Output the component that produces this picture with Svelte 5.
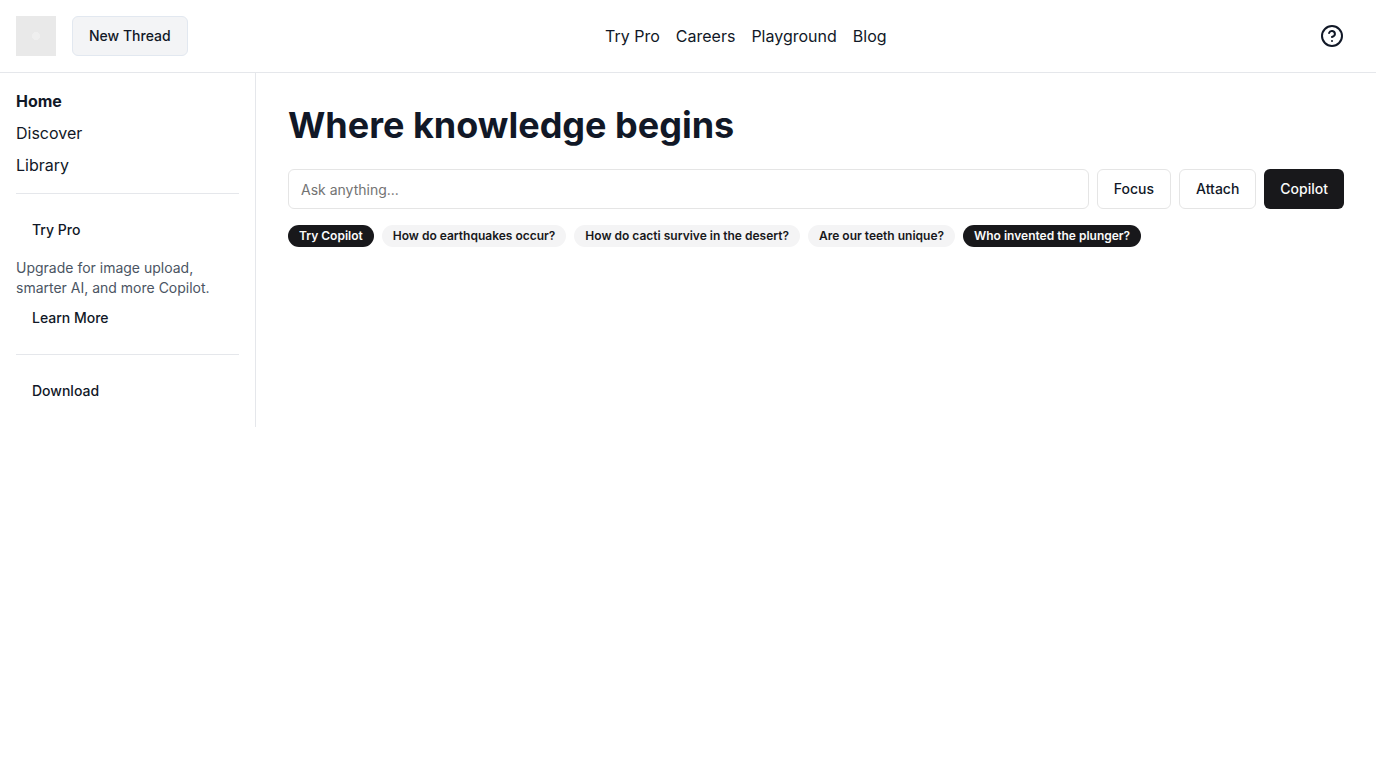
<script>
  const links = ['Try Pro', 'Careers', 'Playground', 'Blog'];
  const pages = ['Home', 'Discover', 'Library'];
  const suggestions = [
    { text: 'Try Copilot', dark: true },
    { text: 'How do earthquakes occur?', dark: false },
    { text: 'How do cacti survive in the desert?', dark: false },
    { text: 'Are our teeth unique?', dark: false },
    { text: 'Who invented the plunger?', dark: true }
  ];
  let question = $state('');
</script>

<header class="topbar">
  <div class="brand">
    <svg class="logo" width="40" height="40" viewBox="0 0 40 40" role="img" aria-label="Logo">
      <rect width="40" height="40" fill="#e9e9e9" />
      <path d="M18.500 16h3l2.500 2.500v3L21.500 24h-3L16 21.500v-3z" fill="#efefef" />
    </svg>
    <button class="btn soft" type="button">New Thread</button>
  </div>
  <nav class="links" aria-label="Site">
    {#each links as link}
      <a href="#top">{link}</a>
    {/each}
  </nav>
  <button class="btn" type="button" aria-label="Help">
    <svg width="24" height="24" viewBox="0 0 24 24" fill="none" stroke="currentColor" stroke-width="2" stroke-linecap="round" stroke-linejoin="round" aria-hidden="true">
      <circle cx="12" cy="12" r="10" />
      <path d="M9.090 9a3 3 0 0 1 5.830 1c0 2-3 3-3 3" />
      <path d="M12 17h.01" />
    </svg>
  </button>
</header>

<div class="body">
  <aside class="sidebar">
    <nav class="pages" aria-label="Pages">
      {#each pages as page, i}
        <a href="#top" class:current={i === 0} aria-current={i === 0 ? 'page' : undefined}>{page}</a>
      {/each}
    </nav>
    <hr />
    <section>
      <button class="btn" type="button">Try Pro</button>
      <p>Upgrade for image upload, smarter AI, and more Copilot.</p>
      <button class="btn" type="button">Learn More</button>
    </section>
    <hr />
    <button class="btn" type="button">Download</button>
  </aside>

  <main>
    <h1>Where knowledge begins</h1>
    <form class="ask" onsubmit={(e) => e.preventDefault()}>
      <input type="text" aria-label="Ask anything" placeholder="Ask anything..." bind:value={question} />
      <button class="btn outline" type="button">Focus</button>
      <button class="btn outline" type="button">Attach</button>
      <button class="btn dark" type="submit">Copilot</button>
    </form>
    <div class="chips">
      {#each suggestions as item}
        <button class="chip" class:dark={item.dark} type="button" onclick={() => (question = item.text)}>{item.text}</button>
      {/each}
    </div>
  </main>
</div>

<style>
  :global(body) {
    margin: 0;
    background: #fff;
    color: #111827;
    font-family: Inter, sans-serif;
    font-size: 16px;
    line-height: 24px;
    font-optical-sizing: none;
  }
  * {
    box-sizing: border-box;
  }
  a {
    color: inherit;
    text-decoration: none;
  }
  .topbar {
    display: flex;
    align-items: center;
    justify-content: space-between;
    padding: 16px;
    border-bottom: 1px solid #e5e7eb;
  }
  .brand,
  .links {
    display: flex;
    align-items: center;
    gap: 16px;
  }
  .logo {
    display: block;
  }
  .btn {
    display: inline-flex;
    align-items: center;
    justify-content: center;
    height: 40px;
    padding: 0 16px;
    border: 0;
    border-radius: 6px;
    background: transparent;
    color: #111827;
    font: 500 14px/20px Inter, sans-serif;
    white-space: nowrap;
    cursor: pointer;
  }
  .soft {
    border: 1px solid #e2e8f0;
    background: #f3f4f6;
  }
  .outline {
    border: 1px solid #e5e5e5;
    background: #fff;
  }
  .dark.btn {
    background: #18181b;
    color: #fafafa;
  }
  .body {
    display: flex;
    align-items: flex-start;
  }
  .sidebar {
    flex: none;
    width: 256px;
    padding: 16px;
    border-right: 1px solid #e5e7eb;
  }
  .pages {
    display: flex;
    flex-direction: column;
    gap: 8px;
  }
  .current {
    font-weight: 700;
  }
  hr {
    height: 1px;
    margin: 16px 0;
    border: 0;
    background: #e5e7eb;
  }
  .sidebar .btn {
    display: flex;
  }
  p {
    margin: 8px 0 0;
    color: #4b5563;
    font-size: 14px;
    line-height: 20px;
  }
  main {
    flex: 1;
    min-width: 0;
    padding: 32px;
  }
  h1 {
    margin: 0 0 24px;
    font-size: 36px;
    line-height: 40px;
    font-weight: 700;
  }
  .ask {
    display: flex;
    gap: 8px;
    margin-bottom: 16px;
  }
  input {
    flex: 1;
    min-width: 0;
    height: 40px;
    padding: 8px 12px;
    border: 1px solid #e5e5e5;
    border-radius: 6px;
    background: #fff;
    color: #111827;
    font: 400 14px/20px Inter, sans-serif;
  }
  input::placeholder {
    color: #737373;
  }
  .chips {
    display: flex;
    flex-wrap: wrap;
    gap: 8px;
  }
  .chip {
    padding: 2px 10px;
    border: 1px solid transparent;
    border-radius: 11px;
    background: #f4f4f5;
    color: #18181b;
    font: 600 12px/16px Inter, sans-serif;
    cursor: pointer;
  }
  .chip.dark {
    background: #18181b;
    color: #fafafa;
  }
</style>
